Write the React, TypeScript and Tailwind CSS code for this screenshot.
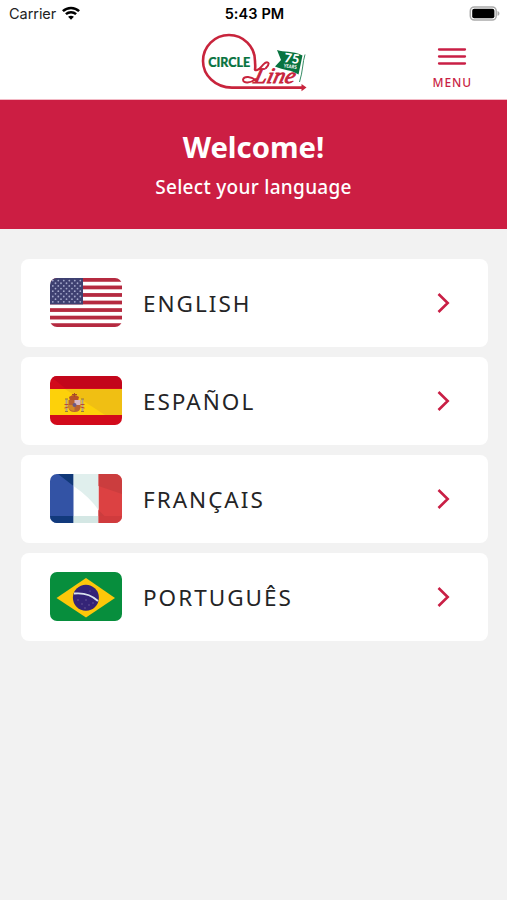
import React from 'react';

type Language = {
  code: string;
  label: string;
  flag: React.ReactNode;
};

function StatusBar() {
  return (
    <div className="grid h-7 grid-cols-3 items-center pl-[9px] pr-[7px] font-['Inter','Liberation_Sans',sans-serif] text-[14.5px] text-[#222]">
      <div className="flex items-center gap-[6px]">
        <span className="tracking-[-0.05px]">Carrier</span>
        <svg className="-mt-[2px]" width="18" height="14" viewBox="0 0 18 14" fill="none" stroke="#000" strokeWidth="2.5">
          <path d="M0.9 5.2C5.4 0.8 12.6 0.8 17.1 5.2" />
          <path d="M3.9 8.2C6.8 5.5 11.2 5.5 14.1 8.2" />
          <path d="M9 13.7L6.1 10.7C7.8 9.3 10.2 9.3 11.9 10.7Z" fill="#000" stroke="none" />
        </svg>
      </div>
      <span className="-mt-px text-center text-[14.5px] font-semibold tracking-[0.1px] text-black">5:43 PM</span>
      <svg className="-mt-[2px] justify-self-end" width="31" height="15" viewBox="0 0 31 15">
        <rect x="1.3" y="0.9" width="25.9" height="13.2" rx="4" fill="#fff" stroke="#aaa" strokeWidth="1.5" />
        <rect x="3.2" y="2.8" width="22.2" height="9.4" rx="2" fill="#000" />
        <path d="M28.5 5v4.8c2.6-.8 2.6-4 0-4.8z" fill="#aaa" />
      </svg>
    </div>
  );
}

function Logo() {
  return (
    <svg width="106" height="60" viewBox="0 0 106 60">
      <path
        d="M54 37C54.6 33 54 31 54 28A26 26 0 1 0 2 28C2 42 14 54.6 31 54.6H102"
        fill="none"
        stroke="#c8243c"
        strokeWidth="2.6"
      />
      <path d="M100.5 51l5 3.6l-5 3.6z" fill="#c8243c" />
      <text x="7.3" y="33.7" textLength="42" lengthAdjust="spacingAndGlyphs" fill="#08733f" stroke="#08733f" strokeWidth="0.2" className="font-['Lato',sans-serif] text-[12.8px] font-black">
        CIRCLE
      </text>
      {/* swash that ties the ring to the script word */}
      <path d="M54 37C58 39 60 33 64 30C68 28 69 31 65 35" fill="none" stroke="#c8243c" strokeWidth="2" strokeLinecap="round" />
      <path d="M56 48C50 43 43 43 42 46.5C42 51 50 50 55 46" fill="none" stroke="#c8243c" strokeWidth="1.9" strokeLinecap="round" />
      <g transform="translate(52 49.5) skewX(-14)">
        <text x="0" y="0" textLength="41" lengthAdjust="spacingAndGlyphs" fill="#c8243c" stroke="#c8243c" strokeWidth="0.9" className="font-['Liberation_Serif',serif] text-[22px] italic">
          Line
        </text>
      </g>
      <path d="M76 17C83 20 91 17 101.5 22.5L97.5 41.5C90 36.5 83 37.5 74 33.5L80 27Z" fill="#08733f" />
      <path d="M104 21.5C101.5 29 102 38 98.5 49" fill="none" stroke="#368c65" strokeWidth="1" />
      <g transform="rotate(8 90 28)" fill="#fff" className="font-['Lato',sans-serif] font-black">
        <text x="83" y="30" textLength="15" lengthAdjust="spacingAndGlyphs" className="text-[13px]">75</text>
        <text x="83.5" y="35.2" textLength="13" lengthAdjust="spacingAndGlyphs" className="text-[5px]">YEARS</text>
      </g>
    </svg>
  );
}

function UsFlag() {
  return (
    <svg className="h-full w-full" viewBox="0 0 72 49" preserveAspectRatio="none">
      <rect width="72" height="49" fill="#fff" />
      {[0, 1, 2, 3, 4, 5, 6].map((i) => (
        <rect key={i} y={i * 7.54} width="72" height="3.77" fill="#b52a40" />
      ))}
      <rect width="33" height="26.4" fill="#3e4071" />
      {Array.from({ length: 9 }, (_, row) =>
        Array.from({ length: row % 2 === 0 ? 6 : 5 }, (_, col) => (
          <circle
            key={`${row}-${col}`}
            cx={(row % 2 === 0 ? 2.8 : 5.5) + col * 5.5}
            cy={2.6 + row * 2.65}
            r="0.9"
            fill="#a5a8cb"
          />
        ))
      )}
    </svg>
  );
}

function SpainFlag() {
  return (
    <svg className="h-full w-full" viewBox="0 0 72 49" preserveAspectRatio="none">
      <rect width="72" height="49" fill="#d20a1b" />
      <path d="M0 0l15 12h57V0z" fill="#c3061b" />
      <rect y="13" width="72" height="26" fill="#fdd10a" />
      <path d="M15 13h57v26H55z" fill="#f0bf13" />
      {/* coat of arms */}
      <path d="M19 21q5-4 10 0l-1 4h-8z" fill="#b75227" />
      <path d="M22 18.5h5M24.5 17v4" stroke="#a64a27" strokeWidth="1" />
      <path d="M18.5 24h12v7q0 5-6 5t-6-5z" fill="#ba6331" />
      <path d="M24.5 24h6v5h-6z" fill="#d9b9c5" />
      <path d="M18.5 29h6v6q-6-1-6-4z" fill="#d38b24" />
      <circle cx="24.5" cy="29" r="2" fill="#6d5a85" />
      <path d="M16.5 23v12M32.5 23v12" stroke="#b2a08a" strokeWidth="1.8" />
      <path d="M14.5 28.5h4M30.5 28.5h4M14.5 32l4-1M30.5 31l4 1" stroke="#bf4a31" strokeWidth="1" />
      <path d="M15 35.5h3M31 35.5h3M15 23h3M31 23h3" stroke="#9a7935" strokeWidth="1.2" />
    </svg>
  );
}

function FranceFlag() {
  return (
    <svg className="h-full w-full" viewBox="0 0 72 49" preserveAspectRatio="none">
      <rect width="24" height="49" fill="#3353a5" />
      <rect x="23.5" width="25" height="49" fill="#fff" />
      <rect x="48.5" width="23.5" height="49" fill="#dc4142" />
      <path d="M8 0h15.5v12z" fill="#103878" />
      <path d="M23.5 0h25v36q-9-13-25-24z" fill="#e0efed" />
      <path d="M48.5 0H72v20L48.5 12z" fill="#cb3d3e" />
      <path d="M48.5 36l6 6h-6z" fill="#cb3d3e" />
      <rect y="42" width="23.5" height="7" fill="#123a7c" />
      <rect x="23.5" y="42" width="25" height="7" fill="#d4e7e4" />
      <rect x="48.5" y="42" width="23.5" height="7" fill="#d03b3d" />
    </svg>
  );
}

function BrazilFlag() {
  return (
    <svg className="h-full w-full" viewBox="0 0 72 49" preserveAspectRatio="none">
      <rect width="72" height="49" fill="#078e3d" />
      <path d="M36 6L65 26L36 45.5L6.5 26z" fill="#fdc70a" />
      <circle cx="35.9" cy="25.7" r="13" fill="#342477" />
      <path d="M24 21.5Q38.5 20 48 29" fill="none" stroke="#d9e2ed" strokeWidth="1.8" />
      <g fill="#7565a2">
        <circle cx="28" cy="28" r="0.7" />
        <circle cx="32" cy="32" r="0.7" />
        <circle cx="36" cy="28" r="0.7" />
        <circle cx="39" cy="33" r="0.7" />
        <circle cx="43" cy="31" r="0.7" />
        <circle cx="35" cy="36" r="0.7" />
        <circle cx="40" cy="19" r="0.6" />
      </g>
    </svg>
  );
}

const languages: Language[] = [
  { code: 'en', label: 'ENGLISH', flag: <UsFlag /> },
  { code: 'es', label: 'ESPAÑOL', flag: <SpainFlag /> },
  { code: 'fr', label: 'FRANÇAIS', flag: <FranceFlag /> },
  { code: 'pt', label: 'PORTUGUÊS', flag: <BrazilFlag /> },
];

function LanguageCard({ language }: { language: Language }) {
  return (
    <button className="flex h-[88.4px] w-full items-center rounded-lg bg-white pl-[29px] pr-[37px] text-left">
      <span className="h-[49px] w-[72px] shrink-0 overflow-hidden rounded-[7px]">{language.flag}</span>
      <span className="ml-[21px] flex-1 pt-[2px] text-[22.5px] leading-8 tracking-[2px] text-[#242426]">{language.label}</span>
      <svg width="14" height="20" viewBox="0 0 14 20" fill="none" stroke="#c91f45" strokeWidth="2.6">
        <path d="M1.5 1L10.7 10L1.5 19" />
      </svg>
    </button>
  );
}

function App() {
  return (
    <div className="min-h-screen bg-[#f2f2f2] font-['Noto_Sans',sans-serif]">
      <header className="h-[100px] border-b border-[#f3b9c5] bg-white">
        <StatusBar />
        <div className="grid grid-cols-3 items-start pt-[5px]">
          <div className="col-start-2 flex justify-center">
            <Logo />
          </div>
          <button className="mr-[35px] mt-[14px] flex flex-col items-center justify-self-end text-[#c91f45]">
            <svg width="30" height="20" viewBox="0 0 30 20" stroke="currentColor" strokeWidth="2.3" strokeLinecap="round">
              <path d="M2 2.5h26M2 9.5h26M2 16.5h26" />
            </svg>
            <span className="mt-[8px] text-[12px] font-medium leading-4 tracking-[0.9px]">MENU</span>
          </button>
        </div>
      </header>

      <section className="flex h-[129px] flex-col items-center bg-[#cc1e43] pt-[27px] text-white">
        <h1 className="text-[29.3px] font-bold leading-10">Welcome!</h1>
        <p className="mt-[6px] text-[19px] font-medium leading-7 tracking-[0.3px]">Select your language</p>
      </section>

      <main className="flex flex-col gap-[9.7px] pl-[21px] pr-[19px] pt-[29.5px]">
        {languages.map((language) => (
          <LanguageCard key={language.code} language={language} />
        ))}
      </main>
    </div>
  );
}

export default App;
